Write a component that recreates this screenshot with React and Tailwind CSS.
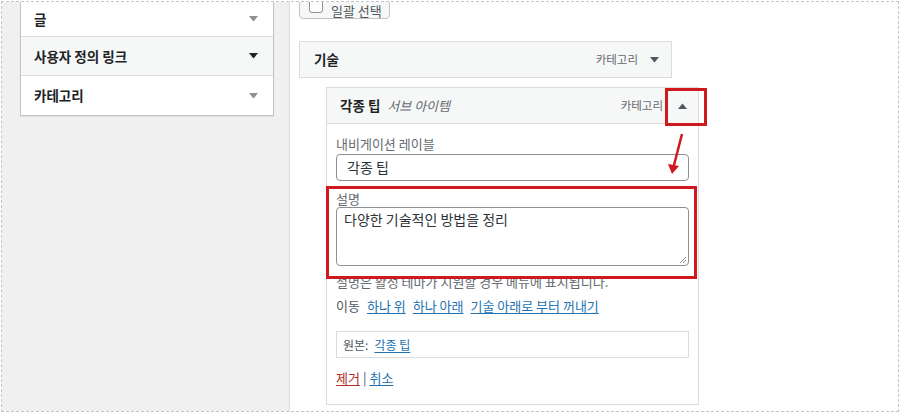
import React from "react";

const font = { fontFamily: '"Noto Sans CJK KR", "Noto Sans", sans-serif' };

const Caret = ({ up = false, color = "#50575e" }) => (
  <svg width="9" height="6" viewBox="0 0 9 6" className="shrink-0">
    {up ? (
      <path d="M0 6 L4.5 0.5 L9 6 Z" fill={color} />
    ) : (
      <path d="M0 0 L4.5 5.5 L9 0 Z" fill={color} />
    )}
  </svg>
);

const SideRow = ({ label, active, first }) => (
  <div
    className={`flex items-center justify-between pl-[13px] pr-[15px] border-b border-[#dcdcde] last:border-b-0 ${
      first ? "h-[35px]" : "h-[39px]"
    } ${active ? "bg-[#f6f7f7]" : "bg-white"}`}
  >
    <span className="text-[13.5px] font-bold text-[#1d2327]">{label}</span>
    <Caret color={active ? "#1d2327" : "#8c8f94"} />
  </div>
);

const Link = ({ children, red }) => (
  <a
    href="#"
    className={`underline underline-offset-2 ${red ? "text-[#b32d2e]" : "text-[#2271b1]"}`}
  >
    {children}
  </a>
);

export default function App() {
  return (
    <div style={font} className="w-[900px] h-[413px] overflow-hidden bg-white p-px">
      <div className="h-[411px] flex border border-dashed border-[#c3c4c7] overflow-hidden">
        {/* left column */}
        <div className="w-[288px] shrink-0 bg-[#f0f0f1] border-r border-[#dcdcde] pl-[18px] pr-[15px]">
          <div className="w-[254px] bg-white border-x border-b border-[#c3c4c7] shadow-[0_1px_1px_rgba(0,0,0,0.06)]">
            <SideRow label="글" first />
            <SideRow label="사용자 정의 링크" active />
            <SideRow label="카테고리" />
          </div>
        </div>

        {/* right column */}
        <div className="flex-1 pl-[9px]">
          <div className="-mt-[13px] h-[30px] w-[91px] flex items-center gap-[8px] pl-[9px] border border-[#c3c4c7] rounded bg-[#f6f7f7]">
            <span className="w-[14px] h-[14px] mt-[4px] border border-[#8c8f94] rounded-[3px] bg-white" />
            <span className="text-[13px] leading-[15px] text-[#50575e] mt-[12px]">일괄 선택</span>
          </div>

          <div className="mt-[22px] w-[373px] h-[37px] flex items-center justify-between pl-[14px] pr-[12px] border border-[#dcdcde] bg-[#f6f7f7]">
            <span className="text-[13.5px] font-bold text-[#1d2327]">기술</span>
            <div className="flex items-center gap-[12px]">
              <span className="text-[11.5px] text-[#646970]">카테고리</span>
              <Caret color="#50575e" />
            </div>
          </div>

          {/* sub item */}
          <div className="relative ml-[27px] mt-[9px] w-[373px]">
            <div className="relative h-[37px] flex items-center justify-between pl-[13px] pr-[11px] border border-[#dcdcde] bg-[#f6f7f7]">
              <div className="flex items-center gap-[7px]">
                <span className="text-[13.5px] font-bold text-[#1d2327]">각종 팁</span>
                <span className="text-[13px] italic text-[#646970]">서브 아이템</span>
              </div>
              <div className="flex items-center gap-[15px]">
                <span className="text-[11.5px] text-[#646970]">카테고리</span>
                <Caret up color="#50575e" />
              </div>
              <div className="absolute left-[338px] top-0 w-[42px] h-[38px] border-[3px] border-[#d0191e] z-10" />
            </div>

            <div className="border-x border-b border-[#dcdcde] bg-white px-[9px] pt-[11px] pb-[17px] text-[13px]">
              <div className="leading-[18px] text-[#646970]">내비게이션 레이블</div>
              <div className="mt-[1px] h-[27px] flex items-center px-[10px] border border-[#8c8f94] rounded-[4px] text-[14px] text-[#2c3338]">
                각종 팁
              </div>

              <div className="relative mt-[9px]">
                <div className="leading-[17px] text-[#646970]">설명</div>
                <div className="h-[59px] px-[7px] pt-[1px] border border-[#8c8f94] rounded-[4px] text-[14px] text-[#2c3338] relative">
                  다양한 기술적인 방법을 정리
                  <svg width="8" height="8" viewBox="0 0 8 8" className="absolute right-[1px] bottom-[1px]">
                    <path d="M7 1 L1 7 M7 4 L4 7" stroke="#8c8f94" strokeWidth="1" />
                  </svg>
                </div>
                <div className="absolute -left-[10px] -right-[8px] -top-[4px] -bottom-[13px] border-[3px] border-[#d0191e] z-10" />
              </div>

              <div className="mt-[7px] leading-[18px] text-[#646970]">
                설명은 활성 테마가 지원할 경우 메뉴에 표시됩니다.
              </div>

              <div className="mt-[6px] leading-[18px] text-[#50575e] flex gap-[7px]">
                <span>이동</span>
                <Link>하나 위</Link>
                <Link>하나 아래</Link>
                <Link>기술 아래로 부터 꺼내기</Link>
              </div>

              <div className="mt-[16px] h-[27px] flex items-center gap-[6px] px-[6px] border border-[#dcdcde] text-[12px] text-[#50575e]">
                <span>원본:</span>
                <Link>각종 팁</Link>
              </div>

              <div className="mt-[11px] leading-[18px] text-[#50575e] flex gap-[3px]">
                <Link red>제거</Link>
                <span>|</span>
                <Link>취소</Link>
              </div>
            </div>

            {/* annotation arrow */}
            <svg width="30" height="50" viewBox="0 0 30 50" className="absolute left-[338px] top-[44px] z-10">
              <path d="M18 3 L9 38" stroke="#d0191e" strokeWidth="2.5" fill="none" />
              <path d="M4 33 L8 43 L15 35 Z" fill="#d0191e" />
            </svg>
          </div>
        </div>
      </div>
    </div>
  );
}
